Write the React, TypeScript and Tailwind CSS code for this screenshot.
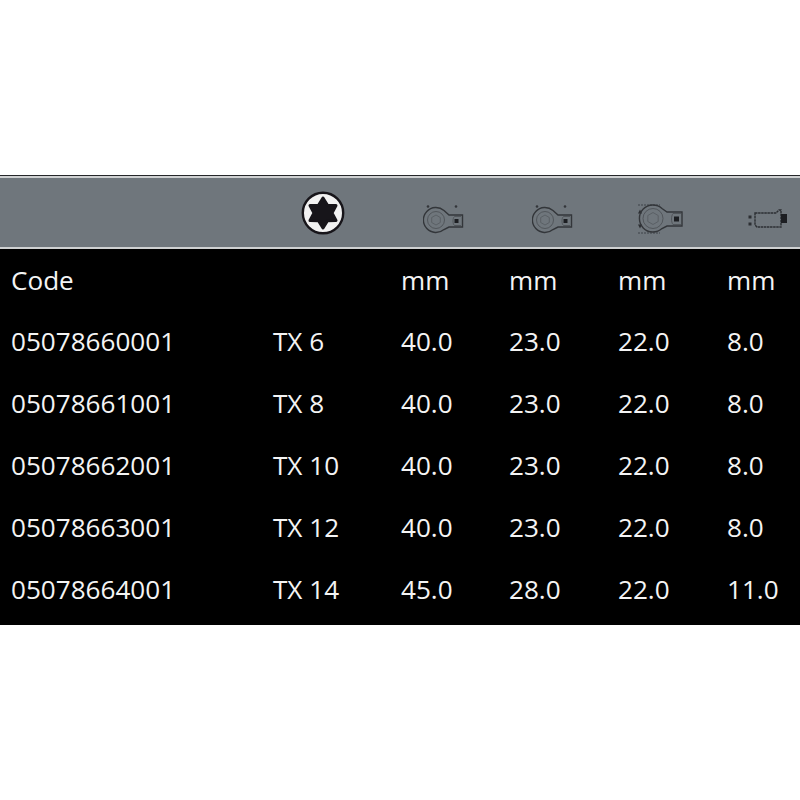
import React from 'react';

const rows = [
  ['05078660001', 'TX 6', '40.0', '23.0', '22.0', '8.0'],
  ['05078661001', 'TX 8', '40.0', '23.0', '22.0', '8.0'],
  ['05078662001', 'TX 10', '40.0', '23.0', '22.0', '8.0'],
  ['05078663001', 'TX 12', '40.0', '23.0', '22.0', '8.0'],
  ['05078664001', 'TX 14', '45.0', '28.0', '22.0', '11.0'],
];

const cols = 'grid grid-cols-[262px_128px_108px_109px_109px_73px] pl-[11px]';

const polar = (cx: number, cy: number, r: number, deg: number) => {
  const a = (deg * Math.PI) / 180;
  return `${(cx + r * Math.cos(a)).toFixed(1)},${(cy + r * Math.sin(a)).toFixed(1)}`;
};

const torxPoints = () => {
  const pts: string[] = [];
  for (let i = 0; i < 12; i++) {
    pts.push(polar(22, 22, i % 2 === 0 ? 15 : 9, 30 * i - 90));
  }
  return pts.join(' ');
};

const hexPoints = (cx: number, cy: number, r: number) => {
  const pts: string[] = [];
  for (let i = 0; i < 6; i++) pts.push(polar(cx, cy, r, 60 * i - 90));
  return pts.join(' ');
};

const TorxIcon = () => (
  <svg width="44" height="44" viewBox="0 0 44 44" className="mt-[13px] blur-[0.4px]">
    <circle cx="22" cy="22" r="20.200" fill="#f2f2f2" stroke="#17151a" strokeWidth="2.400" />
    <polygon points={torxPoints()} fill="#17151a" stroke="#17151a" strokeWidth="3" strokeLinejoin="round" />
  </svg>
);

const HeadIcon = () => (
  <svg width="41" height="30" viewBox="0 0 41 30" fill="none" className="mt-[27px] blur-[0.7px]">
    <circle cx="5" cy="1.500" r="1.300" fill="#33363a" />
    <circle cx="33" cy="1.500" r="1.300" fill="#33363a" />
    <path d="M21 5.500A12.500 12.500 0 1 0 21 24.500L26 22H39.500V10H26Z" stroke="#33363a" strokeWidth="1.400" />
    <circle cx="13" cy="15" r="8.500" stroke="#4a4e53" strokeWidth="0.800" />
    <polygon points={hexPoints(13, 15, 5)} stroke="#555a5f" strokeWidth="0.800" />
    <path d="M38 11.500H31.500C29.500 13 29.500 19 31.500 20.500H38" stroke="#4a4e53" strokeWidth="0.800" />
    <rect x="31.500" y="14" width="4" height="4" fill="#1c1e22" />
  </svg>
);

const WideHeadIcon = () => (
  <svg width="47" height="32" viewBox="0 0 47 32" fill="none" className="mt-[25px] blur-[0.7px]">
    <path d="M2 2H24M2 30H24" stroke="#3f4348" strokeWidth="1" strokeDasharray="2 1" />
    <path d="M4 6.500L2 10.500H6ZM4 25.500L2 21.500H6Z" fill="#2c2f33" />
    <path d="M26 5.500A13.500 13.500 0 1 0 26 25.500L31 23H46V9H31Z" stroke="#33363a" strokeWidth="1.400" />
    <circle cx="17" cy="15.500" r="10" stroke="#4a4e53" strokeWidth="0.800" />
    <polygon points={hexPoints(17, 15.500, 6)} stroke="#555a5f" strokeWidth="0.800" />
    <path d="M45 10.500H37C35 13 35 19 37 21.500H45" stroke="#4a4e53" strokeWidth="0.800" />
    <rect x="38" y="13.500" width="5" height="5" fill="#1c1e22" />
  </svg>
);

const SleeveIcon = () => (
  <svg width="40" height="24" viewBox="0 0 40 24" fill="none" className="mt-[29px] blur-[0.7px]">
    <rect x="0.500" y="8.500" width="3" height="3" fill="#2c2f33" />
    <rect x="0.500" y="15.500" width="3" height="3" fill="#2c2f33" />
    <path d="M7 6H28L31 3H33V20H9L7 18Z" stroke="#2c2f33" strokeWidth="1.400" strokeDasharray="2.500 0.600" />
    <rect x="33" y="7" width="6" height="9" fill="#1c1e22" />
  </svg>
);

const App = () => {
  return (
    <div className="h-[800px] w-[800px] overflow-hidden bg-white pt-[175px] font-['Open_Sans',sans-serif] text-[26.1px] text-[#f4f4f4]">
      <div className="h-px bg-[#26272a]" />

      {/* Icon header */}
      <div className="h-[73px] border-y-2 border-y-[#cfd1d2] bg-[#6f767c]">
        <div className={cols}>
          <div />
          <div className="pl-[28px]"><TorxIcon /></div>
          <div className="pl-[22px]"><HeadIcon /></div>
          <div className="pl-[23px]"><HeadIcon /></div>
          <div className="pl-[18px]"><WideHeadIcon /></div>
          <div className="pl-[21px]"><SleeveIcon /></div>
        </div>
      </div>

      {/* Table */}
      <div className="bg-black pb-[5px]">
        <div className={`${cols} h-[61px] leading-[62px]`}>
          <div>Code</div>
          <div />
          <div>mm</div>
          <div>mm</div>
          <div>mm</div>
          <div>mm</div>
        </div>
        {rows.map((row) => (
          <div key={row[0]} className={`${cols} leading-[62px]`}>
            {row.map((cell, i) => (
              <div key={i}>{cell}</div>
            ))}
          </div>
        ))}
      </div>
    </div>
  );
};

export default App;
